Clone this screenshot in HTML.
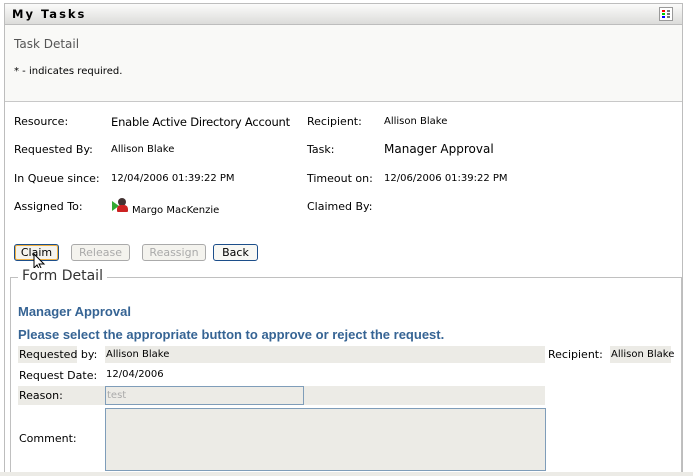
<!DOCTYPE html>
<html><head><style>
html,body{margin:0;width:693px;height:476px;overflow:hidden}
body{background:#fff;font-family:"DejaVu Sans","Liberation Sans",sans-serif;font-size:11px;color:#000;position:relative}
.a{position:absolute;white-space:nowrap}
.panel{position:absolute;left:4px;top:3px;width:679px;height:473px;border:1px solid #bdbdbd;border-bottom:none;box-sizing:border-box}
.hdr{position:absolute;left:0;top:0;width:677px;height:20px;background:linear-gradient(#fbfbfa,#dcdcda);border-bottom:1px solid #bdbdbd;font-weight:bold;font-size:11.5px;letter-spacing:2px}
.top{position:absolute;left:0;top:21px;width:677px;height:76px;background:#f9f9f7;border-bottom:1px solid #c8c8c8}
.btn{position:absolute;top:244px;height:15px;border:1px solid #aaa;border-radius:3px;background:#f4f3ee;font-size:11px;text-align:center;line-height:15px;color:#aaa}
.shade{position:absolute;background:#ecebe6}
.blue{color:#366494;font-weight:bold;font-family:"Liberation Sans",sans-serif}
</style></head><body>
<div class="panel">
<div class="hdr"><span class="a" style="left:7px;top:3px">My Tasks</span>
<div class="a" style="left:654px;top:3px;width:12px;height:12px;border:1px solid #999;background:#fff">
<div class="a" style="left:2px;top:2px;width:3px;height:2px;background:#f00"></div><div class="a" style="left:7px;top:2px;width:3px;height:2px;background:#777"></div>
<div class="a" style="left:2px;top:5px;width:3px;height:2px;background:#0c0"></div><div class="a" style="left:7px;top:5px;width:3px;height:2px;background:#777"></div>
<div class="a" style="left:2px;top:8px;width:3px;height:2px;background:#00f"></div><div class="a" style="left:7px;top:8px;width:3px;height:2px;background:#777"></div></div></div>
<div class="top"></div>
</div>
<span class="a" style="left:14px;top:37px;font-size:12px;color:#555">Task Detail</span>
<span class="a" style="left:14px;top:66px;font-size:10px">* - indicates required.</span>
<span class="a" style="left:14px;top:115px">Resource:</span>
<span class="a" style="left:111px;top:115px;font-size:11.5px;letter-spacing:-0.2px">Enable Active Directory Account</span>
<span class="a" style="left:307px;top:115px">Recipient:</span>
<span class="a" style="left:384px;top:116px;font-size:10px">Allison Blake</span>
<span class="a" style="left:14px;top:143px">Requested By:</span>
<span class="a" style="left:111px;top:144px;font-size:10px">Allison Blake</span>
<span class="a" style="left:307px;top:143px">Task:</span>
<span class="a" style="left:384px;top:142px;font-size:12px">Manager Approval</span>
<span class="a" style="left:14px;top:172px">In Queue since:</span>
<span class="a" style="left:111px;top:173px;font-size:10px">12/04/2006 01:39:22 PM</span>
<span class="a" style="left:307px;top:172px">Timeout on:</span>
<span class="a" style="left:384px;top:173px;font-size:10px">12/06/2006 01:39:22 PM</span>
<span class="a" style="left:14px;top:200px">Assigned To:</span>
<div class="a" style="left:112px;top:201px;width:0;height:0;border-left:7px solid #3a3;border-top:5px solid transparent;border-bottom:5px solid transparent"></div>
<div class="a" style="left:118px;top:198px;width:8px;height:8px;border-radius:4px;background:#433"></div>
<div class="a" style="left:117px;top:205px;width:11px;height:7px;border-radius:4px 4px 1px 1px;background:#c22"></div>
<span class="a" style="left:132px;top:205px;font-size:10px">Margo MacKenzie</span>
<span class="a" style="left:307px;top:200px">Claimed By:</span>
<div class="btn" style="left:14px;width:43px;border-color:#1c4e8a;box-shadow:inset 0 0 0 1px #f0b040;color:#000">Claim</div>
<div class="btn" style="left:71px;width:57px">Release</div>
<div class="btn" style="left:142px;width:62px">Reassign</div>
<div class="btn" style="left:213px;width:43px;border-color:#1c4e8a;color:#000;background:#f8f8f4">Back</div>
<svg class="a" style="left:33px;top:253px" width="14" height="20"><path d="M1 1 L1 15 L4 12 L7 18 L9 17 L6 11 L11 11 Z" fill="#fff" stroke="#000"/></svg>
<div class="a" style="left:10px;top:277px;width:670px;height:200px;border:1px solid #c0c0c0;border-bottom:none"></div>
<span class="a" style="left:18px;top:268px;font-size:14px;background:#fff;padding:0 4px;color:#333">Form Detail</span>
<span class="a blue" style="left:18px;top:304px;font-size:13px">Manager Approval</span>
<span class="a blue" style="left:18px;top:327px;font-size:13px">Please select the appropriate button to approve or reject the request.</span>
<div class="shade" style="left:18px;top:346px;width:59px;height:17px"></div>
<div class="shade" style="left:105px;top:346px;width:440px;height:17px"></div>
<div class="shade" style="left:610px;top:346px;width:61px;height:17px"></div>
<span class="a" style="left:19px;top:348px">Requested by:</span>
<span class="a" style="left:106px;top:349px;font-size:10px">Allison Blake</span>
<span class="a" style="left:548px;top:348px">Recipient:</span>
<span class="a" style="left:611px;top:349px;font-size:10px">Allison Blake</span>
<span class="a" style="left:19px;top:369px">Request Date:</span>
<span class="a" style="left:106px;top:369px;font-size:10px">12/04/2006</span>
<div class="shade" style="left:18px;top:386px;width:527px;height:19px"></div>
<span class="a" style="left:19px;top:389px">Reason:</span>
<div class="a" style="left:105px;top:386px;width:197px;height:17px;border:1px solid #7f9db9;background:#ecebe6;color:#aaa;font-size:10px;line-height:17px;text-indent:1px">test</div>
<div class="a" style="left:105px;top:408px;width:439px;height:61px;border:1px solid #7f9db9;background:#ecebe6"></div>
<span class="a" style="left:19px;top:432px">Comment:</span>
<div class="a" style="left:0;top:472px;width:693px;height:4px;background:#ecebe6"></div>
</body></html>
